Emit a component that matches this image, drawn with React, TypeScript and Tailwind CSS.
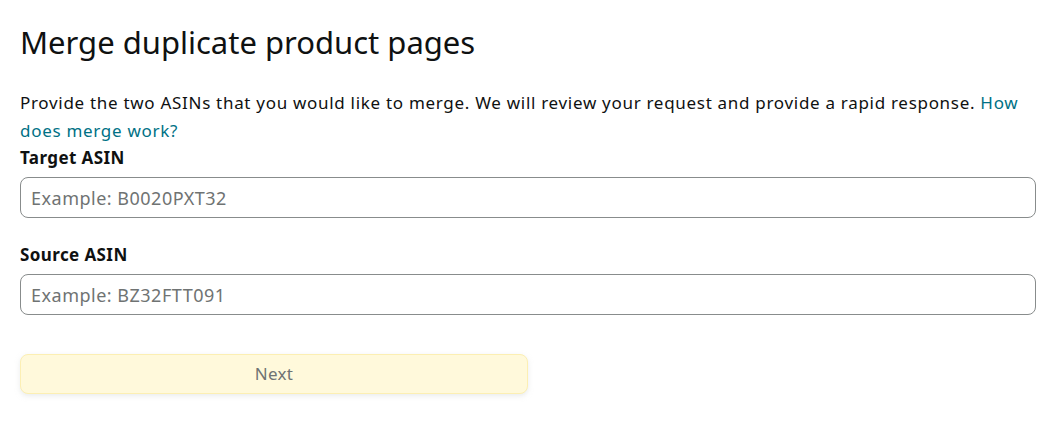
export default function App() {
  return (
    <div className="min-h-screen bg-white pl-5 pr-[27px] pt-[22px] font-['Noto_Sans',sans-serif] text-[#0f1111]">
      <h1 className="text-[31px] leading-[40px] font-normal">Merge duplicate product pages</h1>

      <p className="mt-[27px] text-[17px] leading-[28px] tracking-[0.7px]">
        Provide the two ASINs that you would like to merge. We will review your request and provide a
        rapid response.{" "}
        <a href="#" className="text-[#007185]">
          How does merge work?
        </a>
      </p>

      <label className="block text-[17px] font-bold leading-[26px] tracking-[0.4px]">Target ASIN</label>
      <input
        type="text"
        placeholder="Example: B0020PXT32"
        className="mt-[6px] block h-[41px] w-full rounded-[8px] border border-[#888c8c] px-[10px] text-[18px] tracking-[0.5px] placeholder:text-[#6f7373] outline-none"
      />

      <label className="mt-[24px] block text-[17px] font-bold leading-[26px] tracking-[0.4px]">Source ASIN</label>
      <input
        type="text"
        placeholder="Example: BZ32FTT091"
        className="mt-[6px] block h-[41px] w-full rounded-[8px] border border-[#888c8c] px-[10px] text-[18px] tracking-[0.5px] placeholder:text-[#6f7373] outline-none"
      />

      <button
        type="button"
        className="mt-[39px] h-[40px] w-1/2 rounded-[8px] border border-[#fcefb3] bg-[#fff9db] text-[17px] tracking-[0.3px] text-[#6f7373] shadow-[0_2px_5px_rgba(213,217,217,0.5)]"
      >
        Next
      </button>
    </div>
  );
}
